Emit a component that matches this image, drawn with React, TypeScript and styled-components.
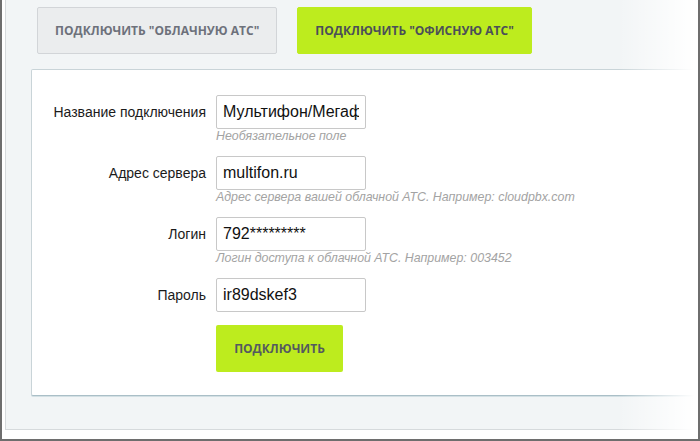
import React from "react";
import styled, { createGlobalStyle } from "styled-components";

const Global = createGlobalStyle`
  html, body { margin: 0; padding: 0; background: #fff; }
  body { font-family: "Liberation Sans", Arial, sans-serif; }
  * { box-sizing: border-box; }
`;

const Frame = styled.div`
  position: relative;
  width: 700px;
  height: 441px;
  border-left: 2px solid #6e6e6e;
  border-right: 2px solid #6e6e6e;
  border-bottom: 2px solid #6e6e6e;
  padding: 0 0 9px 3px;
  background: #fff;
  overflow: hidden;
`;

const Panel = styled.div`
  height: 100%;
  background: #f2f5f6;
  border-left: 1px solid #d6dadc;
  border-bottom: 1px solid #d6dadc;
  padding: 7px 0 0 25px;
  display: flex;
  flex-direction: column;
`;

const Tabs = styled.div`
  display: flex;
  gap: 20px;
  margin-left: 6px;
`;

const TabButton = styled.button<{ $active?: boolean }>`
  height: 47px;
  padding: 0 17px;
  border-radius: 2px;
  border: 1px solid ${(p) => (p.$active ? "#bdec1e" : "#d2d5d8")};
  background: ${(p) => (p.$active ? "#bdec1e" : "#ebedee")};
  color: ${(p) => (p.$active ? "#4b4f58" : "#6d717b")};
  font-family: "Open Sans", sans-serif;
  font-weight: 700;
  font-size: 12px;
  text-transform: uppercase;
  cursor: pointer;
`;

const Card = styled.div`
  margin-top: 15px;
  margin-right: -10px;
  background: #fff;
  border: 1px solid #c9d4d8;
  border-bottom: 1px solid #aabfc7;
  box-shadow: 0 1px 0 #d3e0e4;
  border-radius: 2px 0 0 2px;
  padding: 25px 0 23px 0;
`;

const Form = styled.div`
  display: flex;
  flex-direction: column;
`;

const Field = styled.div<{ $last?: boolean }>`
  display: grid;
  grid-template-columns: 174px auto;
  column-gap: 10px;
  align-items: center;
  margin-bottom: ${(p) => (p.$last ? "13px" : "12px")};
`;

const Label = styled.label`
  text-align: right;
  font-size: 14px;
  color: #1b1b1b;
`;

const Input = styled.input`
  width: 150px;
  height: 34px;
  border: 1px solid #c8c8c8;
  border-radius: 2px;
  padding: 0 6px;
  font-family: "Liberation Sans", Arial, sans-serif;
  font-size: 16px;
  color: #111;
  background: #fff;
  outline: none;
`;

const Hint = styled.div`
  grid-column: 2;
  font-size: 12.4px;
  line-height: 15px;
  font-style: italic;
  color: #a3a3a3;
  white-space: nowrap;
`;

const Submit = styled.button`
  margin-left: 184px;
  width: 127px;
  height: 47px;
  border: none;
  border-radius: 2px;
  background: #bdec1e;
  color: #545a5f;
  font-family: "Open Sans", sans-serif;
  font-weight: 700;
  font-size: 12px;
  text-transform: uppercase;
  cursor: pointer;
`;

const Fade = styled.div`
  position: absolute;
  top: 0;
  right: 0;
  bottom: 0;
  width: 80px;
  background: linear-gradient(to right, rgba(255, 255, 255, 0), #fff 95%);
  pointer-events: none;
`;

const fields = [
  { label: "Название подключения", value: "Мультифон/Мегафон", hint: "Необязательное поле" },
  { label: "Адрес сервера", value: "multifon.ru", hint: "Адрес сервера вашей облачной АТС. Например: cloudpbx.com" },
  { label: "Логин", value: "792*********", hint: "Логин доступа к облачной АТС. Например: 003452" },
  { label: "Пароль", value: "ir89dskef3" },
];

export default function App() {
  return (
    <>
      <Global />
      <Frame>
        <Panel>
          <Tabs>
            <TabButton>Подключить "облачную АТС"</TabButton>
            <TabButton $active>Подключить "офисную АТС"</TabButton>
          </Tabs>
          <Card>
            <Form>
              {fields.map((f, i) => (
                <Field key={i} $last={!f.hint}>
                  <Label>{f.label}</Label>
                  <Input defaultValue={f.value} readOnly />
                  {f.hint && <Hint>{f.hint}</Hint>}
                </Field>
              ))}
              <Submit>Подключить</Submit>
            </Form>
          </Card>
        </Panel>
        <Fade />
      </Frame>
    </>
  );
}
